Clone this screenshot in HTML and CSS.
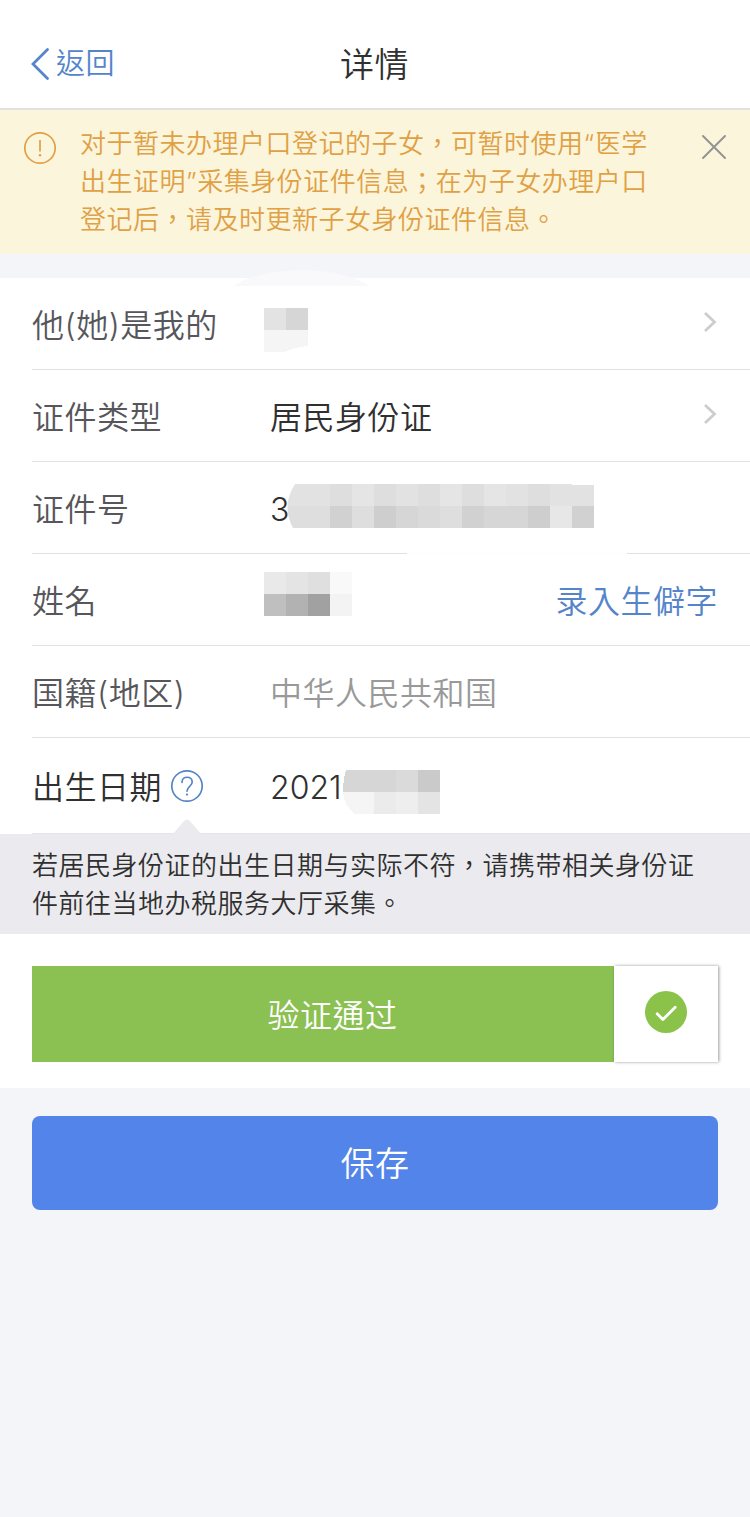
FILE: index.html
```
<!DOCTYPE html>
<html lang="zh-Hant">
<head>
<meta charset="utf-8">
<title>详情</title>
<link rel="stylesheet" href="styles.css">
</head>
<body>
<header class="navbar">
  <a class="back"><svg width="20" height="34" viewBox="0 0 20 34"><path d="M17.500 2.500L3 17l14.500 14.500" fill="none" stroke="#5584cb" stroke-width="2.800" stroke-linecap="round"/></svg><span>返回</span></a>
  <h1 class="title">详情</h1>
</header>
<section class="notice">
  <svg class="notice-icon" width="34" height="34" viewBox="0 0 34 34"><circle cx="17" cy="17" r="15.200" fill="none" stroke="#e0a044" stroke-width="1.700"/><path d="M17 9v11.500" stroke="#e0a044" stroke-width="1.700"/><circle cx="17" cy="24.300" r="1.200" fill="#e0a044"/></svg>
  <p class="notice-text">对于暂未办理户口登记的子女，可暂时使用<span class="quote">“</span>医学<br>出生证明<span class="quote">”</span>采集身份证件信息；在为子女办理户口<br>登记后，请及时更新子女身份证件信息。</p>
  <svg class="close" width="26" height="26" viewBox="0 0 26 26"><path d="M2 2l22 22M24 2L2 24" stroke="#939393" stroke-width="2" stroke-linecap="round"/></svg>
</section>
<main class="form">
  <div class="row">
    <span class="label">他(她)是我的</span>
    <svg class="halo" width="140" height="18" viewBox="0 0 140 18"><path d="M0 17C30-4 105-4 135 17z" fill="#f9f9fb"/></svg>
    <svg class="mosaic" width="44" height="44" viewBox="0 0 44 44" shape-rendering="crispEdges"><path fill="#e3e3e3" d="M0 0h22v22H0z"/><path fill="#d6d6d6" d="M22 0h22v22H22z"/><path fill="#f5f5f5" d="M0 22h44v16q-12 1-24 6H0z"/></svg>
    <svg class="chevron" width="16" height="24" viewBox="0 0 16 24"><path d="M3 3l9.500 9L3 21" fill="none" stroke="#cdcdcd" stroke-width="2.800"/></svg>
  </div>
  <div class="row">
    <span class="label">证件类型</span>
    <span class="value">居民身份证</span>
    <svg class="chevron" width="16" height="24" viewBox="0 0 16 24"><path d="M3 3l9.500 9L3 21" fill="none" stroke="#cdcdcd" stroke-width="2.800"/></svg>
  </div>
  <div class="row row-gap">
    <span class="label">证件号</span>
    <span class="value digits">3</span>
    <svg class="mosaic mosaic-id" width="308" height="44" viewBox="0 0 308 44" shape-rendering="crispEdges">
      <clipPath id="idclip"><path d="M9 0H286V1H308V44H7Q-5 22 9 0z"/></clipPath>
      <g clip-path="url(#idclip)">
        <path fill="#e2e2e2" d="M0 0h308v22H0z"/><path fill="#dedede" d="M0 22h308v22H0z"/>
        <path fill="#dedede" d="M44 0h22v22H44zM88 0h22v22H88zM132 0h22v22h-22zM176 0h22v22h-22zM242 0h22v22h-22z"/>
        <path fill="#e5e5e5" d="M66 0h22v22H66zM154 0h22v22h-22zM198 0h22v22h-22z"/>
        <path fill="#d1d1d1" d="M44 22h22v22H44zM176 22h22v22h-22zM286 22h22v22h-22z"/>
        <path fill="#cecece" d="M88 22h22v22H88zM242 22h22v22h-22z"/>
        <path fill="#d6d6d6" d="M110 22h22v22h-22zM198 22h44v22h-44z"/><path fill="#dadada" d="M132 22h22v22h-22z"/>
        <path fill="#e7e7e7" d="M264 22h22v22h-22z"/>
      </g>
    </svg>
  </div>
  <div class="row">
    <span class="label">姓名</span>
    <svg class="mosaic mosaic-name" width="88" height="44" viewBox="0 0 88 44" shape-rendering="crispEdges"><path fill="#e9e9e9" d="M0 0h22v22H0z"/><path fill="#e4e4e4" d="M22 0h22v22H22z"/><path fill="#dfdfdf" d="M44 0h22v22H44z"/><path fill="#f9f9f9" d="M66 0h22v22H66z"/><path fill="#bfbfbf" d="M0 22h22v22H0z"/><path fill="#b2b2b2" d="M22 22h22v22H22z"/><path fill="#a1a1a1" d="M44 22h22v22H44z"/><path fill="#f3f3f3" d="M66 22h22v22H66z"/></svg>
    <a class="link">录入生僻字</a>
  </div>
  <div class="row">
    <span class="label">国籍(地区)</span>
    <span class="value muted">中华人民共和国</span>
  </div>
  <div class="row row-last">
    <span class="label dark">出生日期<svg class="help" width="34" height="34" viewBox="0 0 34 34"><circle cx="17" cy="17" r="15.200" fill="none" stroke="#5684c6" stroke-width="1.700"/><path d="M12 13.300c.1-6.800 10.200-6.600 10.200-.2 0 4.300-5.200 4.200-5.200 9" fill="none" stroke="#5684c6" stroke-width="1.700" stroke-linecap="round"/><circle cx="17" cy="25.600" r="1.100" fill="#5684c6"/></svg></span>
    <span class="value digits">2021</span>
    <svg class="mosaic mosaic-date" width="98" height="44" viewBox="0 0 98 44" shape-rendering="crispEdges"><path fill="#d6d6d6" d="M4 0h50v22H1Q1 10 4 0z"/><path fill="#dadada" d="M54 0h22v22H54z"/><path fill="#cacaca" d="M76 0h22v22H76z"/><path fill="#f5f5f5" d="M1 22h31v22H13Q2 36 1 22z"/><path fill="#ebebeb" d="M32 22h22v22H32z"/><path fill="#eee" d="M54 22h22v22H54z"/><path fill="#e4e4e4" d="M76 22h22v22H76z"/></svg>
    <svg class="pointer" width="28" height="15" viewBox="0 0 28 15"><path d="M0 15L11 2q3-3 6 0l11 13z" fill="#ebebef"/></svg>
  </div>
</main>
<p class="tip">若居民身份证的出生日期与实际不符，请携带相关身份证<br>件前往当地办税服务大厅采集。</p>
<section class="verify">
  <div class="passed">验证通过</div>
  <div class="check"><svg width="42" height="42" viewBox="0 0 42 42"><circle cx="21" cy="21" r="21" fill="#8bc34a"/><path d="M12.200 22.800l5.700 5.700L30.200 16.200" fill="none" stroke="#fff" stroke-width="2.800" stroke-linecap="round" stroke-linejoin="round"/></svg></div>
</section>
<button class="save">保存</button>
</body>
</html>
```
FILE: styles.css
```
* { box-sizing: border-box; }
body {
  margin: 0;
  min-height: 1517px;
  background: #f3f5f9;
  color: #303030;
  font-family: Inter, "Noto Sans CJK TC DemiLight", "Noto Sans CJK TC", sans-serif;
  font-weight: 350;
  letter-spacing: .5px;
}
svg { display: block; flex: none; }
.navbar {
  display: grid;
  grid-template-columns: 1fr auto 1fr;
  align-items: center;
  height: 110px;
  padding: 20px 31px 0 30px;
  background: #fff;
  border-bottom: 2px solid #e1e1e1;
}
.back { display: flex; align-items: center; gap: 6px; font-size: 29px; line-height: 40px; color: #5584cb; }
.title { margin: 2px 0 0; font-size: 34px; line-height: 40px; font-weight: 350; }
.notice {
  display: flex;
  align-items: flex-start;
  height: 144px;
  padding: 15px 23px 0 23px;
  background: #fbf5dc;
  color: #e0a044;
}
.notice-icon { margin-top: 6px; }
.notice-text { flex: 1; margin: 0 0 0 23px; font-size: 26px; line-height: 38px; white-space: nowrap; }
.quote { font-family: Inter, sans-serif; }
.close { margin-top: 9px; }
.form { margin-top: 24px; background: #fff; }
.row {
  position: relative;
  display: flex;
  align-items: center;
  height: 92px;
  margin-left: 32px;
  padding: 4px 32px 0 0;
  border-bottom: 1px solid #e1e1e1;
  font-size: 32px;
  line-height: 46px;
  white-space: nowrap;
}
.row-last { height: 96px; border-bottom-color: #e4e4e8; }
.label { display: flex; align-items: center; flex: none; width: 238px; color: #56565b; }
.label.dark { color: #303030; }
.help { margin-left: 8px; margin-top: -3px; }
.value { color: #303030; }
.value.digits { letter-spacing: 0; }
.value.muted { color: #999; }
.chevron { margin-left: auto; margin-right: 0; margin-top: -7px; }
.link { margin-left: auto; color: #5584cb; }
.mosaic { margin-left: -6px; margin-top: 9px; }
.mosaic-id { position: absolute; left: 254px; top: 22px; margin: 0; }
.mosaic-name { margin-top: -16px; }
.mosaic-date { position: absolute; left: 310px; top: 32px; margin: 0; }
.halo { position: absolute; left: 202px; top: -9px; }
.row-gap::after { content: ""; position: absolute; left: 375px; bottom: -1px; width: 220px; height: 1px; background: #fdfdfd; }
.pointer { position: absolute; left: 141px; bottom: -1px; }
.tip {
  height: 100px;
  margin: 0;
  padding: 13px 32px 0;
  background: #ebebef;
  font-size: 26px;
  line-height: 38px;
  white-space: nowrap;
}
.verify { display: flex; height: 154px; padding: 32px 32px 26px; background: #fff; }
.passed {
  flex: 1;
  background: #8bc053;
  color: #fff;
  font-size: 32px;
  line-height: 100px;
  text-align: center;
  padding-left: 19px;
}
.check {
  display: flex;
  justify-content: center;
  width: 104px;
  padding-top: 25px;
  background: #fff;
  box-shadow: 1px 0 3px rgba(0, 0, 0, .4);
}
.save {
  display: block;
  width: 686px;
  height: 94px;
  margin: 28px 32px 0;
  padding: 2px 0 0;
  border: 0;
  border-radius: 8px;
  background: #5284e9;
  color: #fff;
  font: 350 34px/92px Inter, "Noto Sans CJK TC DemiLight", "Noto Sans CJK TC", sans-serif;
  letter-spacing: .5px;
}
```
